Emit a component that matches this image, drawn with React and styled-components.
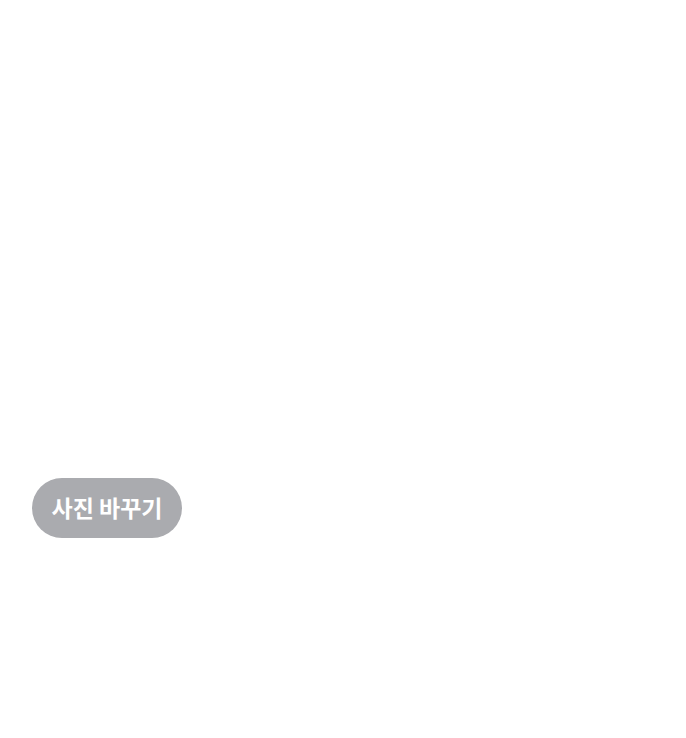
import styled, { createGlobalStyle } from 'styled-components';

const GlobalStyle = createGlobalStyle`
  body {
    margin: 0;
    background: #ffffff;
    font-family: "Noto Sans CJK KR", "Noto Sans", sans-serif;
  }
`;

const Page = styled.div`
  width: 686px;
  height: 738px;
  box-sizing: border-box;
  padding: 478px 0 0 32px;
  display: flex;
  flex-direction: column;
  align-items: flex-start;
`;

const ChangePhotoButton = styled.button`
  width: 150px;
  height: 60px;
  padding: 0 0 3px;
  border: none;
  border-radius: 30px;
  background: #aaabaf;
  color: #ffffff;
  font-family: "Noto Sans CJK KR", sans-serif;
  font-size: 23px;
  font-weight: 700;
  cursor: pointer;
`;

const App = () => {
  return (
    <>
      <GlobalStyle />
      <Page>
        <ChangePhotoButton>사진 바꾸기</ChangePhotoButton>
      </Page>
    </>
  );
};

export default App;
